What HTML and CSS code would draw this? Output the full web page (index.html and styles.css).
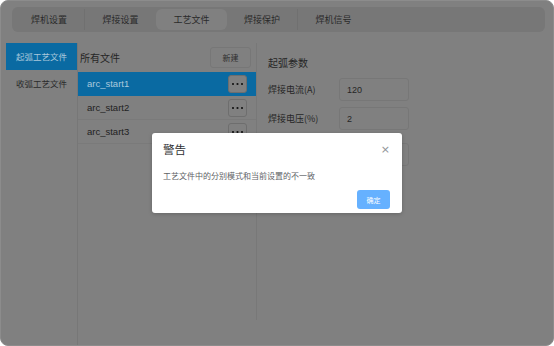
FILE: index.html
```html
<!DOCTYPE html>
<html lang="zh">
<head>
    <meta charset="UTF-8">
    <title>工艺文件</title>
    <link rel="stylesheet" href="styles.css">
</head>
<body>
    <div class="window">
        <div class="tabs">
            <div class="tab">焊机设置</div>
            <div class="tab">焊接设置</div>
            <div class="tab active">工艺文件</div>
            <div class="tab">焊接保护</div>
            <div class="tab">焊机信号</div>
        </div>

        <div class="main">
            <div class="sidebar">
                <div class="side-item active">起弧工艺文件</div>
                <div class="side-item">收弧工艺文件</div>
            </div>

            <div class="file-list">
                <div class="list-head">
                    <span>所有文件</span>
                    <button class="btn-new">新建</button>
                </div>
                <div class="file-row selected">
                    <span>arc_start1</span>
                    <button class="btn-more"><svg width="13" height="4" viewBox="0 0 13 4"><circle cx="2" cy="2" r="1.1"/><circle cx="6.5" cy="2" r="1.1"/><circle cx="11" cy="2" r="1.1"/></svg></button>
                </div>
                <div class="file-row">
                    <span>arc_start2</span>
                    <button class="btn-more"><svg width="13" height="4" viewBox="0 0 13 4"><circle cx="2" cy="2" r="1.1"/><circle cx="6.5" cy="2" r="1.1"/><circle cx="11" cy="2" r="1.1"/></svg></button>
                </div>
                <div class="file-row">
                    <span>arc_start3</span>
                    <button class="btn-more"><svg width="13" height="4" viewBox="0 0 13 4"><circle cx="2" cy="2" r="1.1"/><circle cx="6.5" cy="2" r="1.1"/><circle cx="11" cy="2" r="1.1"/></svg></button>
                </div>
            </div>

            <div class="params">
                <h3>起弧参数</h3>
                <div class="param-row">
                    <label>焊接电流(A)</label>
                    <input type="text" value="120">
                </div>
                <div class="param-row">
                    <label>焊接电压(%)</label>
                    <input type="text" value="2">
                </div>
                <div class="param-row tall">
                    <label>起弧时间(ms)</label>
                    <input type="text" value="100">
                </div>
            </div>
        </div>

        <!-- warning dialog -->
        <div class="dialog">
            <div class="dialog-head">
                <span class="dialog-title">警告</span>
                <span class="dialog-close">&times;</span>
            </div>
            <div class="dialog-body">工艺文件中的分别模式和当前设置的不一致</div>
            <div class="dialog-foot">
                <button class="btn-ok">确定</button>
            </div>
        </div>
    </div>
</body>
</html>
```

FILE: styles.css
```css
body {
    margin: 0;
    background: #ffffff;
    font-family: "Noto Sans CJK SC", "Liberation Sans", sans-serif;
}
.window {
    position: relative;
    width: 554px;
    height: 346px;
    box-sizing: border-box;
    background: #808080;
    border: 1px solid #8c8c8c;
    border-radius: 8px;
    overflow: hidden;
}
.tabs {
    display: flex;
    margin: 6px 8px 0 11px;
    height: 25px;
    padding: 2px;
    box-sizing: border-box;
    background: #777777;
    border-radius: 6px;
}
.tab {
    width: 71px;
    text-align: center;
    font-size: 9px;
    line-height: 21px;
    color: #2a2a2a;
    box-sizing: border-box;
}
.tab.active {
    background: #808080;
    border-radius: 6px;
}
.tab:first-child,
.tab:nth-child(4) {
    border-right: 1px solid #707070;
}
.main {
    display: flex;
    margin-top: 11px;
    height: 303px;
}
.sidebar {
    width: 77px;
    flex-shrink: 0;
    padding-left: 5px;
    box-sizing: border-box;
    border-right: 1px solid #777777;
}
.side-item {
    height: 27px;
    line-height: 27px;
    text-align: center;
    font-size: 8.5px;
    color: #2b2b2b;
}
.side-item.active {
    background: #0a6aa2;
    color: #a9c8dc;
}
.file-list {
    width: 178px;
    height: 277px;
    flex-shrink: 0;
    border-right: 1px solid #787878;
}
.list-head {
    display: flex;
    justify-content: space-between;
    align-items: center;
    height: 29px;
    padding: 0 5px 0 2px;
    font-size: 10px;
    color: #262626;
}
.btn-new {
    width: 41px;
    height: 21px;
    background: #808080;
    border: 1px solid #777777;
    border-radius: 3px;
    font-family: inherit;
    font-size: 8px;
    color: #2f2f2f;
    padding: 0;
}
.file-row {
    display: flex;
    justify-content: space-between;
    align-items: center;
    height: 24px;
    padding: 0 9px 0 9px;
    box-sizing: border-box;
    border-bottom: 1px solid #7a7a7a;
    font-family: "Liberation Sans", sans-serif;
    font-size: 9.5px;
    color: #1f1f1f;
}
.file-row.selected {
    background: #0a6aa2;
    color: #a9c8dc;
    border-bottom-color: #0a6aa2;
}
.btn-more {
    display: flex;
    align-items: center;
    justify-content: center;
    width: 19px;
    height: 18px;
    padding: 0;
    background: #808080;
    border: 1px solid #6e6e6e;
    border-radius: 3px;
}
.btn-more svg {
    fill: #111111;
}
.params {
    padding-left: 11px;
    flex: 1;
}
.params h3 {
    margin: 12px 0 8px;
    font-size: 10px;
    font-weight: normal;
    color: #262626;
}
.param-row {
    display: flex;
    align-items: center;
    height: 23px;
    margin-bottom: 6px;
}
.param-row.tall {
    margin-top: 13px;
}
.param-row label {
    width: 71px;
    font-size: 9px;
    color: #262626;
}
.param-row input {
    width: 70px;
    height: 23px;
    box-sizing: border-box;
    padding: 0 7px;
    background: #808080;
    border: 1px solid #777777;
    border-radius: 3px;
    font-family: "Liberation Sans", sans-serif;
    font-size: 9px;
    color: #262626;
}
.dialog {
    position: absolute;
    left: 151px;
    top: 132px;
    width: 250px;
    height: 80px;
    box-sizing: border-box;
    background: #ffffff;
    border-radius: 3px;
    box-shadow: 0 1px 4px rgba(0, 0, 0, 0.2);
    padding: 7px 12px 0 11px;
}
.dialog-head {
    display: flex;
    justify-content: space-between;
    align-items: center;
    height: 18px;
}
.dialog-title {
    font-size: 11.5px;
    color: #303133;
}
.dialog-close {
    font-family: "DejaVu Sans", sans-serif;
    font-size: 11px;
    color: #909399;
}
.dialog-body {
    margin-top: 12px;
    font-size: 8px;
    color: #606266;
}
.dialog-foot {
    display: flex;
    justify-content: flex-end;
    margin-top: 9px;
}
.btn-ok {
    width: 33px;
    height: 19px;
    padding: 0;
    background: #66b1ff;
    border: none;
    border-radius: 3px;
    color: #ffffff;
    font-family: inherit;
    font-size: 7px;
}
```
